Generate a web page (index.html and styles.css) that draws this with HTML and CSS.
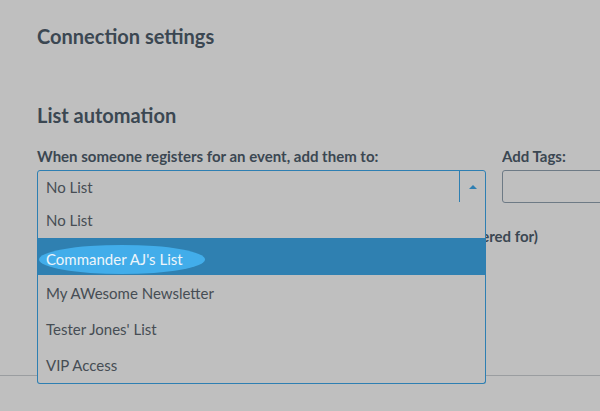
FILE: index.html
```html
<!DOCTYPE html>
<html>
<head>
<meta charset="utf-8">
<link rel="stylesheet" href="styles.css">
</head>
<body>
<div class="page">
  <h2 class="section-title first">Connection settings</h2>
  <h2 class="section-title second">List automation</h2>
  <div class="fields">
    <div class="field list-field">
      <div class="field-label">When someone registers for an event, add them to:</div>
      <div class="select-wrap">
        <div class="select">
          <span class="select-value">No List</span>
          <span class="select-arrow"><span class="caret"></span></span>
        </div>
        <ul class="dropdown">
          <li class="option">No List</li>
          <li class="option active"><span class="hl">Commander AJ's List</span></li>
          <li class="option">My AWesome Newsletter</li>
          <li class="option">Tester Jones' List</li>
          <li class="option">VIP Access</li>
        </ul>
      </div>
    </div>
    <div class="field tags-field">
      <div class="field-label">Add Tags:</div>
      <div class="tags-input"></div>
    </div>
  </div>
  <div class="check-row"><span class="check-text">(for the events they registered for)</span></div>
</div>
<div class="divider"></div>
</body>
</html>
```
FILE: styles.css
```css
html, body {
  margin: 0;
  padding: 0;
  background: #bfbfbf;
  overflow: hidden;
}
body {
  width: 600px;
  height: 411px;
  font-family: Lato, "Noto Sans", sans-serif;
  color: #3b4752;
}
.page {
  padding-left: 37px;
}
.section-title {
  margin: 0;
  font-size: 20px;
  font-weight: 700;
  line-height: 24px;
  color: #3b4752;
}
.section-title.first {
  padding-top: 24px;
}
.section-title.second {
  padding-top: 55px;
}
.fields {
  display: flex;
  gap: 16px;
  margin-top: 20px;
}
.list-field {
  width: 449px;
  flex: none;
}
.tags-field {
  flex: 1;
  min-width: 0;
  overflow: hidden;
}
.field-label {
  font-size: 15px;
  font-weight: 700;
  line-height: 18px;
  height: 18px;
  margin-bottom: 5px;
  color: #3b4752;
  white-space: nowrap;
}
.select-wrap {
  position: relative;
}
.select {
  box-sizing: border-box;
  height: 33px;
  border: 1px solid #2e7fb2;
  border-radius: 3px 3px 0 0;
  display: flex;
  align-items: center;
}
.select-value {
  flex: 1;
  padding-left: 8px;
  font-size: 15px;
  color: #464d54;
}
.select-arrow {
  width: 25px;
  height: 100%;
  border-left: 1px solid #2e7fb2;
  display: flex;
  align-items: center;
  justify-content: center;
}
.caret {
  width: 0;
  height: 0;
  border-left: 4px solid transparent;
  border-right: 4px solid transparent;
  border-bottom: 4px solid #2e7fb2;
}
.tags-input {
  box-sizing: border-box;
  height: 33px;
  width: 140px;
  border: 1px solid #6d7a85;
  border-radius: 3px;
}
.dropdown {
  position: absolute;
  left: 0;
  right: 0;
  top: 32px;
  margin: 0;
  padding: 0;
  list-style: none;
  background: #bfbfbf;
  border: 1px solid #2e7fb2;
  border-top: none;
  border-radius: 0 0 3px 3px;
  z-index: 2;
}
.option {
  height: 36px;
  line-height: 37px;
  padding-left: 8px;
  font-size: 15px;
  color: #464d54;
}
.option:first-child {
  border-bottom: 1px solid #2e7fb2;
}
.option.active {
  background: #2f80b1;
  padding-left: 1px;
}
.hl {
  display: inline-block;
  height: 29px;
  line-height: 29px;
  padding: 0 22px 0 7px;
  border-radius: 50%;
  background: #42adea;
  color: #eef5fa;
  vertical-align: middle;
}
.check-row {
  margin-top: 24px;
  width: 501px;
  display: flex;
  justify-content: flex-end;
}
.check-text {
  font-size: 15px;
  font-weight: 700;
  line-height: 18px;
  color: #3b4752;
  white-space: nowrap;
}
.divider {
  position: absolute;
  left: 0;
  right: 0;
  top: 375px;
  height: 1px;
  background: #9a9da0;
}
```
